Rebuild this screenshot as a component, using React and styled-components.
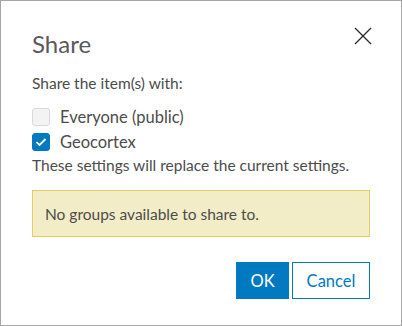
import styled, { createGlobalStyle } from 'styled-components';

const GlobalStyle = createGlobalStyle`
    html, body {
        margin: 0;
        padding: 0;
        background: #ffffff;
    }
    * {
        box-sizing: border-box;
    }
`

const CloseIcon = () => (
    <svg width="18" height="18" viewBox="0 0 18 18">
        <path d="M1 1 L17 17 M17 1 L1 17" stroke="#2b2b2b" strokeWidth="1.3" fill="none" />
    </svg>
)

const CheckMark = () => (
    <svg width="12" height="10" viewBox="0 0 12 10">
        <path d="M1.5 5.2 L4.6 8 L10.5 2" stroke="#ffffff" strokeWidth="1.8" fill="none" />
    </svg>
)

const App = () => {

    const options = [
        { label: 'Everyone (public)', checked: false },
        { label: 'Geocortex', checked: true },
    ];

    return (
        <>
            <GlobalStyle />
            <Dialog>
                <Header>
                    <Title>Share</Title>
                    <CloseButton aria-label="Close">
                        <CloseIcon />
                    </CloseButton>
                </Header>

                <Text top="12px">Share the item(s) with:</Text>

                <Options>
                    {options.map(option => (
                        <Option key={option.label}>
                            <Box checked={option.checked}>
                                {option.checked && <CheckMark />}
                            </Box>
                            <Label>{option.label}</Label>
                        </Option>
                    ))}
                </Options>

                <Text top="3px">These settings will replace the current settings.</Text>

                <Notice>No groups available to share to.</Notice>

                <Footer>
                    <Button primary width="53px">OK</Button>
                    <Button width="78px">Cancel</Button>
                </Footer>
            </Dialog>
        </>
    );
}

const Dialog = styled.div`
    width: 402px;
    height: 326px;
    border: 1px solid #a6a6a6;
    background: #ffffff;
    padding: 0 31px;
    font-family: Lato, "Noto Sans", sans-serif;
    color: #4c4c4c;
`
const Header = styled.div`
    display: flex;
    justify-content: space-between;
    align-items: flex-start;
    padding-top: 27px;
`
const Title = styled.h2`
    margin: 0;
    font-size: 24px;
    font-weight: 400;
    line-height: 32px;
    color: #595959;
`
const CloseButton = styled.button`
    display: flex;
    padding: 0;
    margin: -1px -2px 0 0;
    border: none;
    background: none;
`
const Text = styled.p`
    margin: ${props => props.top} 0 0;
    font-size: 15.5px;
    line-height: 22px;
`
const Options = styled.div`
    display: flex;
    flex-direction: column;
    gap: 7px;
    margin-top: 14px;
`
const Option = styled.label`
    display: flex;
    align-items: center;
    gap: 10px;
    height: 18px;
`
const Box = styled.span`
    width: 18px;
    height: 18px;
    border-radius: 3px;
    display: flex;
    align-items: center;
    justify-content: center;
    background: ${props => props.checked ? '#0079c1' : '#f3f3f3'};
    border: 1px solid ${props => props.checked ? '#0079c1' : '#d9d9d9'};
`
const Label = styled.span`
    font-size: 16.5px;
`
const Notice = styled.div`
    margin-top: 14px;
    height: 47px;
    padding: 0 12px;
    display: flex;
    align-items: center;
    background: #f3edc7;
    border: 1px solid #e3cf62;
    font-size: 15.5px;
`
const Footer = styled.div`
    display: flex;
    justify-content: flex-end;
    gap: 3px;
    margin-top: 25px;
`
const Button = styled.button`
    width: ${props => props.width};
    height: 37px;
    padding: 0;
    font-family: inherit;
    font-size: 16.5px;
    border: 1px solid #0079c1;
    background: ${props => props.primary ? '#0079c1' : '#ffffff'};
    color: ${props => props.primary ? '#ffffff' : '#0079c1'};
`

export default App;
